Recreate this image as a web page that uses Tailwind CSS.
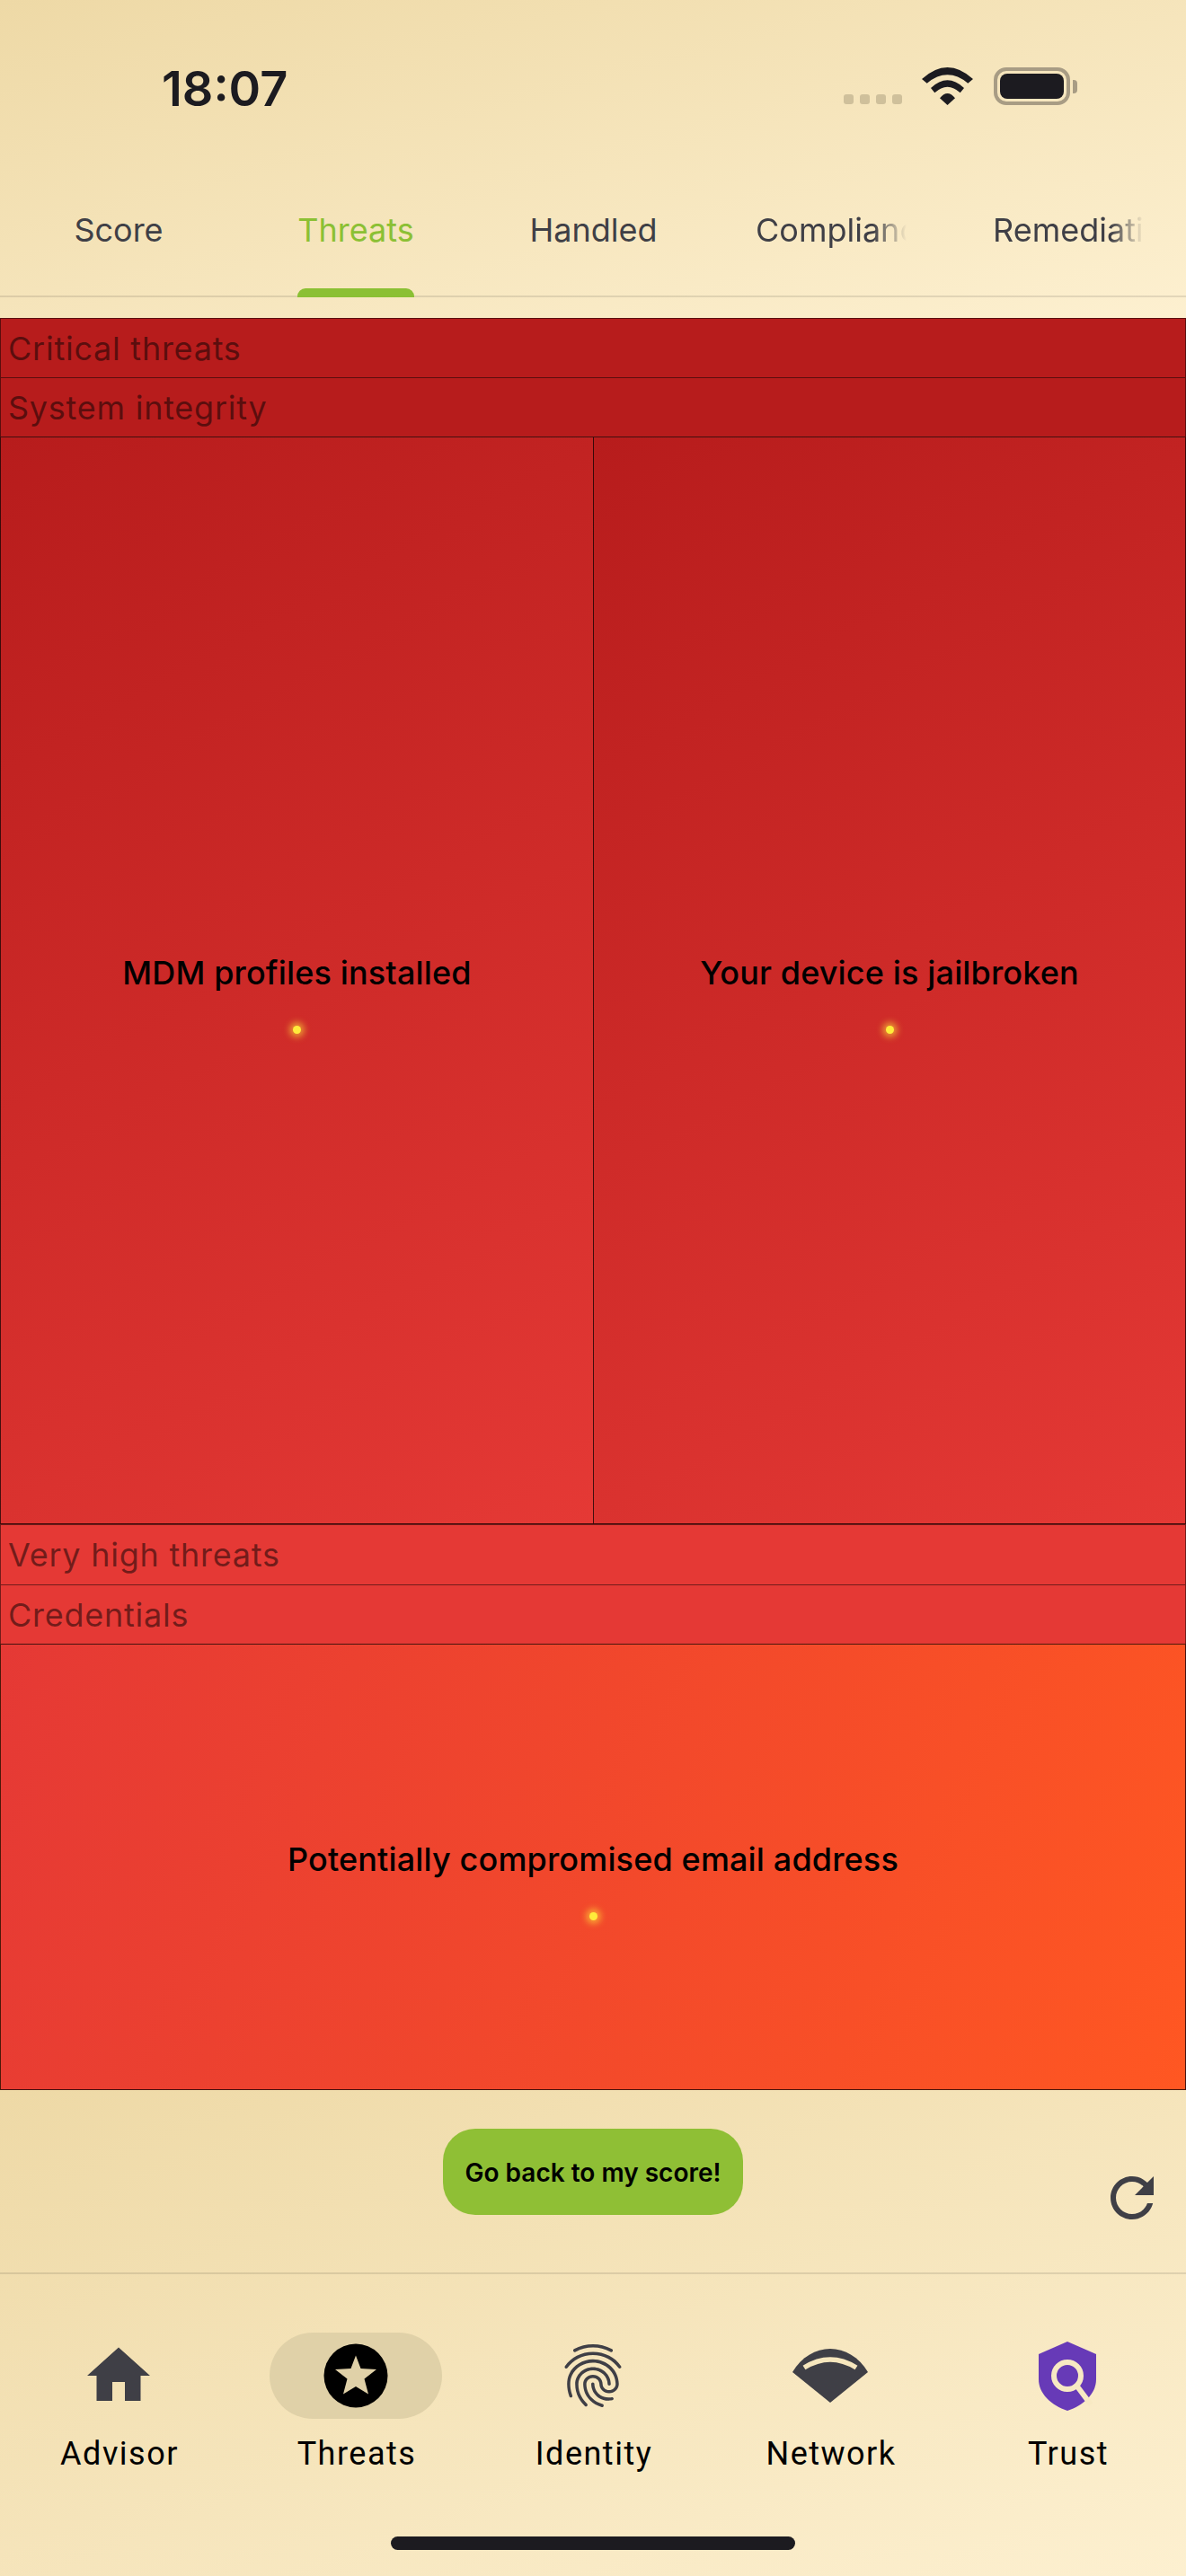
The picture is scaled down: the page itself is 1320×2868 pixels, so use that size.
<!DOCTYPE html>
<html lang="en">
<head>
    <meta charset="UTF-8">
    <meta name="viewport" content="width=device-width, initial-scale=1.0">
    <title>Threats</title>
    <script src="https://cdn.jsdelivr.net/npm/@tailwindcss/browser@4"></script>
</head>
<body class="w-[1320px] h-[2868px] overflow-hidden flex flex-col bg-[#f5e5bb] font-['Inter',sans-serif]">

    <!-- header -->
    <header class="h-[354px] shrink-0 bg-linear-to-br/srgb from-[#eed9a6] to-[#fdf0d0]">
        <div class="h-[195px] flex items-start justify-between pt-[69px] pl-[180px] pr-[121px]">
            <span class="text-[54px] leading-[60px] font-semibold text-[#1c1b20]">18:07</span>
            <div class="flex items-end pt-[6px]">
                <div class="flex gap-[7px] mb-[1px]">
                    <span class="w-[11px] h-[11px] rounded-[3px] bg-[#cfc09b]"></span>
                    <span class="w-[11px] h-[11px] rounded-[3px] bg-[#cfc09b]"></span>
                    <span class="w-[11px] h-[11px] rounded-[3px] bg-[#cfc09b]"></span>
                    <span class="w-[11px] h-[11px] rounded-[3px] bg-[#cfc09b]"></span>
                </div>
                <svg class="ml-[22px]" width="57" height="42" viewBox="0 0 57 42" fill="#1c1b20">
                    <path d="M0 13Q28.5 -13 57 13L51.3 17.7Q28.5 -1.1 5.7 17.7Z"/>
                    <path d="M10 23Q28.5 5.6 47 23L42.7 28.3Q28.5 15.1 14.3 28.3Z"/>
                    <path d="M20 34.3Q28.5 23.7 37 34.3L28.5 42Z"/>
                </svg>
                <div class="ml-[23px] flex items-center">
                    <div class="w-[85px] h-[42px] rounded-[14px] border-[4px] border-[#a89c84] p-[3px]">
                        <div class="w-full h-full rounded-[8px] bg-[#1c1b20]"></div>
                    </div>
                    <span class="ml-[3px] w-[5px] h-[15px] rounded-r-[4px] bg-[#a89c84]"></span>
                </div>
            </div>
        </div>
        <nav class="h-[136px] grid grid-cols-5 border-b-2 border-black/10 text-[36px] leading-[44px] text-[#3f3f46]">
            <div class="flex justify-center pt-[39px]">Score</div>
            <div class="relative flex justify-center pt-[39px] text-[#8bc034]">
                Threats
                <span class="absolute -bottom-[2px] left-[67px] w-[130px] h-[10px] rounded-t-[9px] bg-[#8bc034]"></span>
            </div>
            <div class="flex justify-center pt-[39px] pl-[1px]">Handled</div>
            <div class="pl-[49px] pr-[47px] pt-[39px]">
                <div class="overflow-hidden whitespace-nowrap [mask-image:linear-gradient(to_right,black_78%,transparent_100%)]">Compliance</div>
            </div>
            <div class="pl-[49px] pr-[47px] pt-[39px]">
                <div class="overflow-hidden whitespace-nowrap [mask-image:linear-gradient(to_right,black_78%,transparent_100%)]">Remediation</div>
            </div>
        </nav>
    </header>

    <!-- treemap -->
    <main class="h-[1973px] shrink-0 flex flex-col">
        <div class="h-[66px] shrink-0 flex items-center pl-[8px] bg-[#b71c1c] border-x border-t border-black/50 text-[36px] tracking-[0.75px] text-black/50">Critical threats</div>
        <div class="h-[66px] shrink-0 flex items-center pl-[8px] bg-[#b71c1c] border-x border-t border-black/50 text-[36px] tracking-[0.75px] text-black/50">System integrity</div>
        <div class="h-[1211px] shrink-0 grid grid-cols-[661px_1fr]">
            <div class="flex flex-col items-center justify-center pt-[29px] border border-black/70 bg-linear-[151deg,#b71c1c,#e53935]">
                <span class="text-[36px] leading-[44px] font-medium tracking-[0.15px] text-black">MDM profiles installed</span>
                <span class="mt-[37px] w-[9px] h-[9px] rounded-full bg-[#ffeb3b] shadow-[0_0_7px_4px_rgba(255,235,59,0.55)]"></span>
            </div>
            <div class="flex flex-col items-center justify-center pt-[29px] border border-l-0 border-black/70 bg-linear-[151deg,#b71c1c,#e53935]">
                <span class="text-[36px] leading-[44px] font-medium tracking-[0.15px] text-black">Your device is jailbroken</span>
                <span class="mt-[37px] w-[9px] h-[9px] rounded-full bg-[#ffeb3b] shadow-[0_0_7px_4px_rgba(255,235,59,0.55)]"></span>
            </div>
        </div>
        <div class="h-[67px] shrink-0 flex items-center pl-[8px] bg-[#e53935] border-x border-t border-black/50 text-[36px] tracking-[0.75px] text-black/50">Very high threats</div>
        <div class="h-[66px] shrink-0 flex items-center pl-[8px] bg-[#e53935] border-x border-t border-black/50 text-[36px] tracking-[0.75px] text-black/50">Credentials</div>
        <div class="h-[497px] shrink-0 flex flex-col items-center justify-center pt-[29px] border border-black/70 bg-linear-[111deg,#e53935,#ff5722]">
            <span class="text-[36px] leading-[44px] font-medium tracking-[0.15px] text-black">Potentially compromised email address</span>
            <span class="mt-[37px] w-[9px] h-[9px] rounded-full bg-[#ffeb3b] shadow-[0_0_7px_4px_rgba(255,235,59,0.55)]"></span>
        </div>
    </main>

    <!-- bottom -->
    <footer class="relative flex-1 flex flex-col bg-linear-to-br/srgb from-[#eed9a6] to-[#fdf0d0]">
        <div class="relative h-[205px] shrink-0 flex justify-center pt-[43px] border-b-2 border-black/10">
            <button class="w-[334px] h-[96px] pt-[2px] rounded-[36px] bg-[#8fbf35] text-[28px] font-semibold text-black">Go back to my score!</button>
            <svg class="absolute right-[24px] top-[84px]" width="72" height="72" viewBox="0 0 24 24" fill="#3f3f46"><path d="M17.65 6.35C16.2 4.9 14.21 4 12 4c-4.42 0-7.99 3.58-7.99 8s3.57 8 7.99 8c3.73 0 6.84-2.55 7.73-6h-2.08c-.82 2.33-3.04 4-5.65 4-3.31 0-6-2.69-6-6s2.69-6 6-6c1.66 0 3.14.69 4.22 1.78L13 11h7V4l-2.35 2.35z"/></svg>
        </div>
        <nav class="grid grid-cols-5 pt-[65px] font-['Roboto',sans-serif] text-[36px] leading-[48px] text-black tracking-[1.5px]">
            <div class="flex flex-col items-center">
                <div class="h-[96px] flex items-center justify-center">
                    <svg width="84" height="84" viewBox="0 0 24 24" fill="#3f3f46"><path d="M10 20v-6h4v6h5v-8h3L12 3 2 12h3v8z"/></svg>
                </div>
                <span class="mt-[15px] ml-[2px]">Advisor</span>
            </div>
            <div class="flex flex-col items-center">
                <div class="w-[192px] h-[96px] rounded-full bg-[#e0d1a8] flex items-center justify-center">
                    <svg width="72" height="72" viewBox="0 0 72 72">
                        <circle cx="36" cy="36" r="35.5" fill="#000"/>
                        <path fill="#e0d1a8" d="M36 13.5L41.5 28L59 29L45.5 39.5L50 56.5L36 48L22 56.5L26.5 39.5L13 29L30.5 28Z"/>
                    </svg>
                </div>
                <span class="mt-[15px] ml-[2px]">Threats</span>
            </div>
            <div class="flex flex-col items-center">
                <div class="h-[96px] flex items-center justify-center">
                    <svg width="84" height="84" viewBox="0 0 24 24" fill="#3f3f46"><path d="M17.81 4.47c-.08 0-.16-.02-.23-.06C15.66 3.42 14 3 12.01 3c-1.98 0-3.86.47-5.57 1.41-.24.13-.54.04-.68-.2-.13-.24-.04-.55.2-.68C7.82 2.52 9.86 2 12.01 2c2.13 0 3.99.47 6.03 1.52.25.13.34.43.21.67-.09.18-.26.28-.44.28zM3.5 9.72c-.1 0-.2-.03-.29-.09-.23-.16-.28-.47-.12-.7.99-1.4 2.25-2.5 3.75-3.27C9.98 4.04 14 4.03 17.15 5.65c1.5.77 2.76 1.86 3.75 3.25.16.22.11.54-.12.7-.23.16-.54.11-.7-.12-.9-1.26-2.04-2.25-3.39-2.94-2.87-1.47-6.54-1.47-9.4.01-1.36.7-2.5 1.7-3.4 2.96-.08.14-.23.21-.39.21zm6.25 12.07c-.13 0-.26-.05-.35-.15-.87-.87-1.34-1.43-2.01-2.64-.69-1.23-1.05-2.73-1.05-4.34 0-2.97 2.54-5.39 5.66-5.39s5.66 2.42 5.66 5.39c0 .28-.22.5-.5.5s-.5-.22-.5-.5c0-2.42-2.09-4.39-4.66-4.39-2.57 0-4.66 1.97-4.66 4.39 0 1.44.32 2.77.93 3.85.64 1.15 1.08 1.64 1.85 2.42.19.2.19.51 0 .71-.11.1-.24.15-.37.15zm7.17-1.85c-1.19 0-2.24-.3-3.1-.89-1.49-1.01-2.38-2.65-2.38-4.39 0-.28.22-.5.5-.5s.5.22.5.5c0 1.41.72 2.74 1.94 3.56.71.48 1.54.71 2.54.71.24 0 .64-.03 1.04-.1.27-.05.53.13.58.41.05.27-.13.53-.41.58-.57.11-1.07.12-1.21.12zM14.91 22c-.04 0-.09-.01-.13-.02-1.59-.44-2.63-1.03-3.72-2.1-1.4-1.39-2.17-3.24-2.17-5.22 0-1.62 1.38-2.94 3.08-2.94 1.7 0 3.08 1.32 3.08 2.94 0 1.07.93 1.94 2.08 1.94s2.08-.87 2.08-1.94c0-3.77-3.25-6.83-7.25-6.83-2.84 0-5.44 1.58-6.61 4.03-.39.81-.59 1.76-.59 2.8 0 .78.07 2.01.67 3.61.1.26-.03.55-.29.64-.26.1-.55-.04-.64-.29-.49-1.31-.73-2.61-.73-3.96 0-1.2.23-2.29.68-3.24 1.33-2.79 4.28-4.6 7.51-4.6 4.55 0 8.25 3.51 8.25 7.83 0 1.62-1.38 2.94-3.08 2.94s-3.08-1.32-3.08-2.94c0-1.07-.93-1.94-2.08-1.94s-2.08.87-2.08 1.94c0 1.71.66 3.31 1.87 4.51.95.94 1.86 1.46 3.27 1.85.27.07.42.35.35.61-.05.23-.26.38-.47.38z"/></svg>
                </div>
                <span class="mt-[15px] ml-[2px]">Identity</span>
            </div>
            <div class="flex flex-col items-center">
                <div class="h-[96px] flex items-center justify-center">
                    <svg width="84" height="60" viewBox="0 0 84 60">
                        <path fill="#3f3f46" d="M0 26C10 9 26 0 42 0C58 0 74 9 84 26L42 60Z"/>
                        <path fill="none" stroke="#f6e6bd" stroke-width="5.5" d="M13 21Q42 3 71 21"/>
                    </svg>
                </div>
                <span class="mt-[15px] ml-[2px]">Network</span>
            </div>
            <div class="flex flex-col items-center">
                <div class="h-[96px] flex items-center justify-center">
                    <svg width="64" height="77" viewBox="0 0 64 77">
                        <path fill="#673ab7" d="M32 0L64 14V42C64 58 50 71 32 77C14 71 0 58 0 42V14Z"/>
                        <circle cx="32" cy="38" r="15" fill="none" stroke="#f8e9c3" stroke-width="6"/>
                        <path fill="none" stroke="#f8e9c3" stroke-width="6" d="M43 50L58 70"/>
                    </svg>
                </div>
                <span class="mt-[15px] ml-[2px]">Trust</span>
            </div>
        </nav>
        <div class="absolute left-[435px] bottom-[29px] w-[450px] h-[15px] rounded-full bg-[#1c1b20]"></div>
    </footer>

</body>
</html>
